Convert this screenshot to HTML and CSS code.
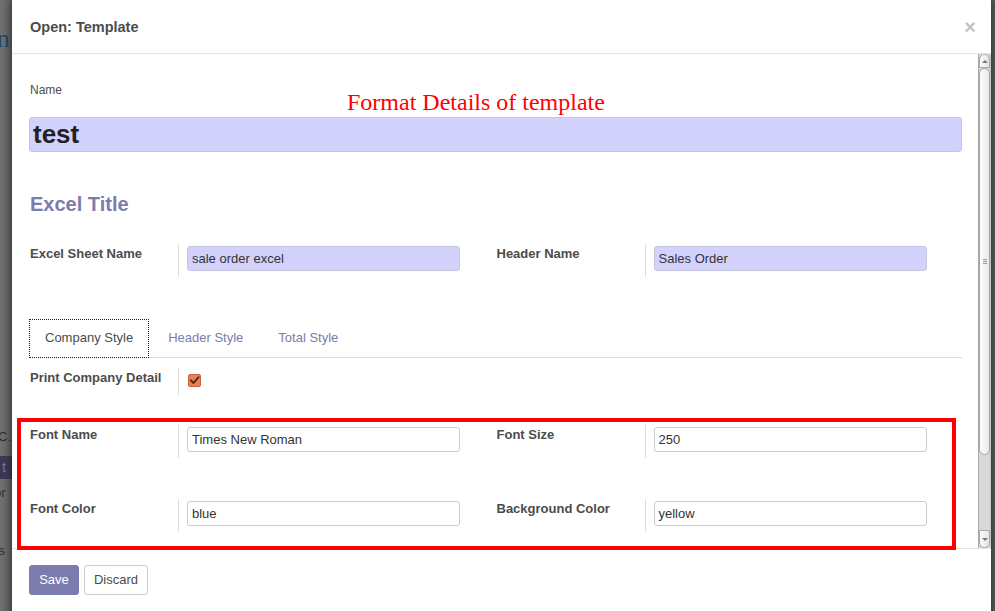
FILE: index.html
```html
<!DOCTYPE html>
<html>
<head>
<meta charset="utf-8">
<title>Open: Template</title>
<link rel="stylesheet" href="styles.css">
</head>
<body>
<div class="backdrop">
  <span class="bg-nf">Inf</span>
  <span class="bg-c">C...</span>
  <span class="bg-btn">t</span>
  <span class="bg-or">or</span>
  <span class="bg-rs">rs</span>
</div>

<div class="modal">
  <header class="modal-header">
    <h4 class="modal-title">Open: Template</h4>
    <span class="close">×</span>
  </header>

  <div class="modal-body">
    <div class="content">
      <div class="name-label">Name</div>
      <div class="name-input">test</div>

      <h2 class="section-title">Excel Title</h2>

      <div class="field-grid first-grid">
        <div class="field">
          <div class="field-label">Excel Sheet Name</div>
          <div class="field-value"><div class="input lav">sale order excel</div></div>
        </div>
        <div class="field">
          <div class="field-label">Header Name</div>
          <div class="field-value"><div class="input lav">Sales Order</div></div>
        </div>
      </div>

      <ul class="tabs">
        <li><a class="tab active">Company Style</a></li>
        <li><a class="tab">Header Style</a></li>
        <li><a class="tab">Total Style</a></li>
      </ul>

      <div class="field-grid print-grid">
        <div class="field">
          <div class="field-label">Print Company Detail</div>
          <div class="field-value check-cell">
            <span class="checkbox">
              <svg viewBox="0 0 13 13" width="13" height="13"><path d="M2.8 6.2 L5.4 9 L10.6 3.2" fill="none" stroke="#5a2a18" stroke-width="1.9" stroke-linecap="round" stroke-linejoin="round"/></svg>
            </span>
          </div>
        </div>
      </div>

      <div class="field-grid font-grid">
        <div class="field">
          <div class="field-label">Font Name</div>
          <div class="field-value"><div class="input">Times New Roman</div></div>
        </div>
        <div class="field">
          <div class="field-label">Font Size</div>
          <div class="field-value"><div class="input">250</div></div>
        </div>
        <div class="field">
          <div class="field-label">Font Color</div>
          <div class="field-value"><div class="input">blue</div></div>
        </div>
        <div class="field">
          <div class="field-label">Background Color</div>
          <div class="field-value"><div class="input">yellow</div></div>
        </div>
      </div>
    </div>

    <div class="scrollbar">
      <div class="sb-up"><span class="arrow-up"></span></div>
      <div class="sb-thumb"><span class="grip"></span></div>
      <div class="sb-track"></div>
      <div class="sb-down"><span class="arrow-down"></span></div>
    </div>
  </div>

  <footer class="modal-footer">
    <button class="btn btn-primary">Save</button>
    <button class="btn btn-default">Discard</button>
  </footer>

  <div class="annotation">Format Details of template</div>
  <div class="highlight-box"></div>
</div>
</body>
</html>
```

FILE: styles.css
```css
* { box-sizing: border-box; }

html, body {
  margin: 0;
  padding: 0;
  width: 995px;
  height: 611px;
  overflow: hidden;
}

body {
  background: #6a6a6a;
  font-family: "Liberation Sans", Arial, sans-serif;
  font-size: 13px;
  color: #4c4c4c;
  position: relative;
}

/* page behind the dialog (dimmed) */
.backdrop {
  position: absolute;
  inset: 0;
  overflow: hidden;
  background: linear-gradient(to right, #727272 0, #626262 10px, #5a5a5a 12px);
}
.backdrop span { position: absolute; white-space: nowrap; }
.bg-nf {
  left: -12px; top: 24px;
  font-family: "Liberation Serif", serif;
  font-size: 26px;
  color: #1d4a68;
}
.bg-c { left: -2px; top: 429px; color: #2d2d2d; font-size: 13px; }
.bg-btn {
  left: 0; top: 456px; width: 12px; height: 23px;
  background: #3b3a55; color: #77778f; font-size: 14px;
  padding-left: 2px; line-height: 22px;
}
.bg-or { left: -6px; top: 485px; color: #2d2d2d; font-size: 13px; }
.bg-rs { left: -6px; top: 543px; color: #2d2d2d; font-size: 13px; }

/* dialog */
.modal {
  position: absolute;
  left: 12px;
  top: 0;
  width: 979px;
  height: 640px;
  background: #fff;
  box-shadow: 0 0 8px rgba(0, 0, 0, 0.55);
}

.modal-header {
  height: 54px;
  border-bottom: 1px solid #e5e5e5;
  display: flex;
  align-items: center;
  justify-content: space-between;
  padding: 0 15px 0 18px;
}
.modal-title {
  margin: 0;
  font-size: 14.5px;
  font-weight: bold;
  color: #4c4c4c;
  line-height: 20px;
}
.close {
  font-size: 20px;
  font-weight: bold;
  color: #c4c4c4;
  line-height: 20px;
}

.modal-body {
  display: flex;
  height: 494px;
}

.content {
  flex: 1;
  padding: 27px 16px 0 17px;
  overflow: hidden;
}

.name-label {
  font-size: 12px;
  line-height: 18px;
  color: #4c4c4c;
  padding-left: 1px;
}

.name-input {
  margin-top: 18px;
  height: 35px;
  background: #d2d2fd;
  border: 1px solid #c5c5dd;
  border-radius: 3px;
  padding: 0 3px;
  font-size: 26px;
  font-weight: bold;
  line-height: 33px;
  color: #222;
}

.section-title {
  margin: 40px 0 0;
  padding-left: 1px;
  font-size: 20px;
  line-height: 24px;
  font-weight: bold;
  color: #7c7bad;
}

.field-grid {
  display: grid;
  grid-template-columns: 1fr 1fr;
}
.first-grid { margin-top: 28px; }
.print-grid { margin-top: 10px; }
.font-grid { margin-top: 30px; row-gap: 41px; }

.field { display: flex; }
.field-label {
  width: 149px;
  flex: none;
  font-weight: bold;
  font-size: 13px;
  line-height: 18px;
  padding: 1px 0 0 1px;
  color: #4c4c4c;
}
.field-value {
  border-left: 1px solid #dedede;
  padding: 2px 0 6px 8px;
}
.check-cell { padding: 6px 0 8px 9px; }

.input {
  width: 273px;
  height: 25px;
  border: 1px solid #cccccc;
  border-radius: 3px;
  padding: 0 4px;
  font-size: 13px;
  line-height: 23px;
  color: #333;
  background: #fff;
}
.input.lav {
  background: #d2d2fd;
  border-color: #c5c5dd;
}

.checkbox {
  display: block;
  width: 13px;
  height: 13px;
  background: #e98157;
  border: 1px solid #c9633a;
  border-radius: 2px;
  position: relative;
}
.checkbox svg { position: absolute; left: -1px; top: -1px; }

/* tabs */
.tabs {
  list-style: none;
  margin: 42px 0 0;
  padding: 0;
  display: flex;
  border-bottom: 1px solid #dddddd;
}
.tabs li { margin-right: 3px; }
.tab {
  display: block;
  padding: 9px 15px 10px;
  line-height: 18px;
  font-size: 13px;
  border: 1px solid transparent;
  margin-bottom: -1px;
  color: #7c7bad;
}
.tab.active {
  color: #4c4c4c;
  background: #fff;
  border: 1px dotted #222;
}

/* fake scrollbar */
.scrollbar {
  width: 13px;
  flex: none;
  display: flex;
  flex-direction: column;
  background: #d8d8d8;
  border-left: 1px solid #a9a9a9;
  border-right: 1px solid #c8c8c8;
}
.sb-up, .sb-down {
  height: 14px;
  background: linear-gradient(to right, #fbfbfb, #e4e4e4);
  border: 1px solid #a9a9a9;
  display: flex;
  align-items: center;
  justify-content: center;
}
.sb-up { border-radius: 6px 6px 0 0; border-top-color: #b9b9b9; }
.sb-down { height: 18px; border-radius: 0 0 6px 6px; }
.arrow-up {
  width: 0; height: 0;
  border-left: 3px solid transparent;
  border-right: 3px solid transparent;
  border-bottom: 3px solid #777;
}
.arrow-down {
  width: 0; height: 0;
  border-left: 3px solid transparent;
  border-right: 3px solid transparent;
  border-top: 3px solid #777;
}
.sb-thumb {
  height: 387px;
  background: linear-gradient(to right, #fdfdfd, #e9e9e9);
  border: 1px solid #a4a4a4;
  border-radius: 6px;
  display: flex;
  align-items: center;
  justify-content: center;
}
.grip {
  width: 4px;
  height: 5px;
  border-top: 1px solid #999;
  border-bottom: 1px solid #999;
  position: relative;
}
.grip::after {
  content: "";
  position: absolute;
  left: 0; right: 0; top: 1px;
  border-top: 1px solid #999;
}
.sb-track { flex: 1; }

/* footer */
.modal-footer {
  border-top: 1px solid #e5e5e5;
  padding: 16px 17px;
  display: flex;
  gap: 5px;
}
.btn {
  height: 30px;
  font-family: "Liberation Sans", Arial, sans-serif;
  font-size: 13px;
  border-radius: 3px;
  padding: 0;
  line-height: 28px;
  text-align: center;
}
.btn-primary {
  width: 50px;
  background: #7c7bad;
  border: 1px solid #7c7bad;
  color: #fff;
}
.btn-default {
  width: 64px;
  background: #fff;
  border: 1px solid #cccccc;
  color: #4c4c4c;
}

/* screenshot annotations drawn over the dialog */
.annotation {
  position: absolute;
  left: 335px;
  top: 90px;
  font-family: "Liberation Serif", "Times New Roman", serif;
  font-size: 24px;
  line-height: 24px;
  color: #f00;
  white-space: nowrap;
}
.highlight-box {
  position: absolute;
  left: 5px;
  top: 418px;
  width: 939px;
  height: 132px;
  border: 4px solid #f00;
}
```
